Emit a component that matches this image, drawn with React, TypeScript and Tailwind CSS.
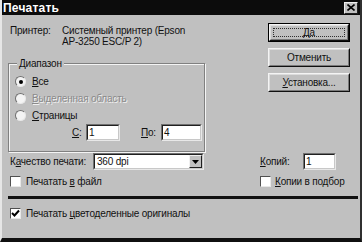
import React from "react";

const font = { fontFamily: '"Liberation Sans", Arial, sans-serif' };

function Radio({ checked }: { checked?: boolean }) {
  return (
    <div className="w-[11px] h-[11px] rounded-full border border-t-[#707070] border-l-[#707070] border-b-[#e8e8e8] border-r-[#e8e8e8] bg-[#f4f4f4] flex items-center justify-center shrink-0">
      {checked && <div className="w-[4px] h-[4px] rounded-full bg-black" />}
    </div>
  );
}

function Check({ checked }: { checked?: boolean }) {
  return (
    <div className="w-[11px] h-[11px] border border-t-[#505050] border-l-[#505050] border-b-[#e8e8e8] border-r-[#e8e8e8] bg-white flex items-center justify-center shrink-0">
      {checked && (
        <svg width="9" height="9" viewBox="0 0 9 9">
          <path d="M1 4 L3.5 6.5 L8 1.5" stroke="#000" strokeWidth="2" fill="none" />
        </svg>
      )}
    </div>
  );
}

function Field({ value, w }: { value: string; w: string }) {
  return (
    <div className={`${w} h-[17px] border border-t-[#707070] border-l-[#707070] border-b-[#e8e8e8] border-r-[#e8e8e8] bg-white flex items-center`}>
      <div className="h-full w-full border border-t-[#202020] border-l-[#202020] border-b-[#c8c8c8] border-r-[#c8c8c8] flex items-center pl-[1px] leading-[11px]">
        {value}
      </div>
    </div>
  );
}

function Button({ children, def }: { children: React.ReactNode; def?: boolean }) {
  return (
    <div className={`w-[82px] h-[19px] ${def ? "border border-black" : ""}`}>
      <div className="w-full h-full border border-t-[#f4f4f4] border-l-[#f4f4f4] border-b-[#101010] border-r-[#101010] bg-[#c0c0c0]">
        <div className="w-full h-full border border-t-[#dcdcdc] border-l-[#dcdcdc] border-b-[#7a7a7a] border-r-[#7a7a7a] flex items-center justify-center">
          {def ? (
            <div className="w-[calc(100%-4px)] h-[calc(100%-4px)] border border-dotted border-[#303030] flex items-center justify-center leading-[11px]">
              {children}
            </div>
          ) : (
            <span className="leading-[11px]">{children}</span>
          )}
        </div>
      </div>
    </div>
  );
}

export default function App() {
  return (
    <div
      style={font}
      className="w-[362px] h-[242px] bg-[#c0c0c0] text-[10px] tracking-[-0.2px] text-[#111] overflow-hidden flex flex-col border-l-[2px] border-l-[#e6e6e6] border-r-[2px] border-r-[#303030] border-b-[4px] border-b-[#101010]"
    >
      {/* title bar */}
      <div className="h-[15px] bg-[#0c0c0c] flex items-center justify-between pl-[1px] pr-[2px] shrink-0">
        <span className="text-white font-bold text-[12px] leading-[12px] tracking-[0.2px]">Печатать</span>
        <div className="w-[14px] h-[12px] bg-[#c0c0c0] border border-t-[#f0f0f0] border-l-[#f0f0f0] border-b-[#202020] border-r-[#202020] flex items-center justify-center">
          <svg width="8" height="7" viewBox="0 0 8 7">
            <path d="M0.5 0.5 L7.5 6.5 M7.5 0.5 L0.5 6.5" stroke="#000" strokeWidth="1.6" />
          </svg>
        </div>
      </div>

      {/* top section */}
      <div className="flex pl-[6px] shrink-0">
        <div className="w-[197px] flex flex-col">
          <div className="mt-[10px] flex pl-[2px] leading-[11px]">
            <div className="w-[52px]">Принтер:</div>
            <div>
              <div>Системный принтер (Epson</div>
              <div>AP-3250 ESC/P 2)</div>
            </div>
          </div>
          {/* group box */}
          <div className="relative mt-[16px] h-[89px] border border-[#808080] shadow-[inset_1px_1px_0_#f4f4f4,1px_1px_0_#f4f4f4]">
            <div className="absolute -top-[6px] left-[8px] bg-[#c0c0c0] px-[2px] leading-[11px]">Диапазон</div>
            <div className="flex flex-col pl-[6px] pt-[12px] gap-[6px]">
              <div className="flex items-center gap-[6px] leading-[11px]">
                <Radio checked />
                <span>
                  <u>В</u>се
                </span>
              </div>
              <div className="flex items-center gap-[6px] leading-[11px]">
                <Radio />
                <span className="text-[#8a8a8a] [text-shadow:1px_1px_0_#f0f0f0]">
                  <u>В</u>ыделенная область
                </span>
              </div>
              <div className="flex items-center gap-[6px] leading-[11px]">
                <Radio />
                <span>
                  <u>С</u>траницы
                </span>
              </div>
            </div>
            <div className="flex items-center mt-[3px] pl-[63px]">
              <span className="w-[14px] leading-[11px]">
                <u>С</u>:
              </span>
              <Field value="1" w="w-[34px]" />
              <span className="ml-[21px] w-[20px] leading-[11px]">
                <u>П</u>о:
              </span>
              <Field value="4" w="w-[41px]" />
            </div>
          </div>
        </div>
        {/* buttons */}
        <div className="ml-[63px] mt-[8px] flex flex-col gap-[6px]">
          <Button def>Да</Button>
          <Button>Отменить</Button>
          <Button>
            <u>У</u>становка...
          </Button>
        </div>
      </div>

      {/* quality row */}
      <div className="flex items-center mt-[1px] pl-[8px] shrink-0">
        <span className="w-[83px] leading-[11px] whitespace-nowrap">
          К<u>а</u>чество печати:
        </span>
        <div className="w-[111px] h-[17px] border border-t-[#707070] border-l-[#707070] border-b-[#e8e8e8] border-r-[#e8e8e8] bg-white">
          <div className="w-full h-full border border-t-[#202020] border-l-[#202020] border-b-[#c8c8c8] border-r-[#c8c8c8] flex items-center">
            <span className="flex-1 pl-[2px] leading-[11px]">360 dpi</span>
            <div className="w-[13px] h-full bg-[#c0c0c0] border border-t-[#f0f0f0] border-l-[#f0f0f0] border-b-[#202020] border-r-[#202020] flex items-center justify-center">
              <svg width="7" height="4" viewBox="0 0 7 4">
                <path d="M0 0 H7 L3.5 4 Z" fill="#000" />
              </svg>
            </div>
          </div>
        </div>
        <span className="ml-[56px] w-[43px] leading-[11px]">
          <u>К</u>опий:
        </span>
        <Field value="1" w="w-[33px]" />
      </div>

      {/* checkboxes row */}
      <div className="flex items-center mt-[6px] pl-[8px] shrink-0">
        <div className="w-[250px] flex items-center gap-[5px] leading-[11px]">
          <Check />
          <span>
            Печатать <u>в</u> файл
          </span>
        </div>
        <div className="flex items-center gap-[4px] leading-[11px]">
          <Check />
          <span>
            <u>К</u>опии в подбор
          </span>
        </div>
      </div>

      {/* separator */}
      <div className="mt-[9px] ml-[6px] mr-[2px] h-[3px] bg-[#111] shrink-0" />

      {/* last checkbox */}
      <div className="flex items-center mt-[9px] pl-[8px] gap-[5px] leading-[11px] shrink-0">
        <Check checked />
        <span>
          Печатать <u>ц</u>ветоделенные оригиналы
        </span>
      </div>
    </div>
  );
}
